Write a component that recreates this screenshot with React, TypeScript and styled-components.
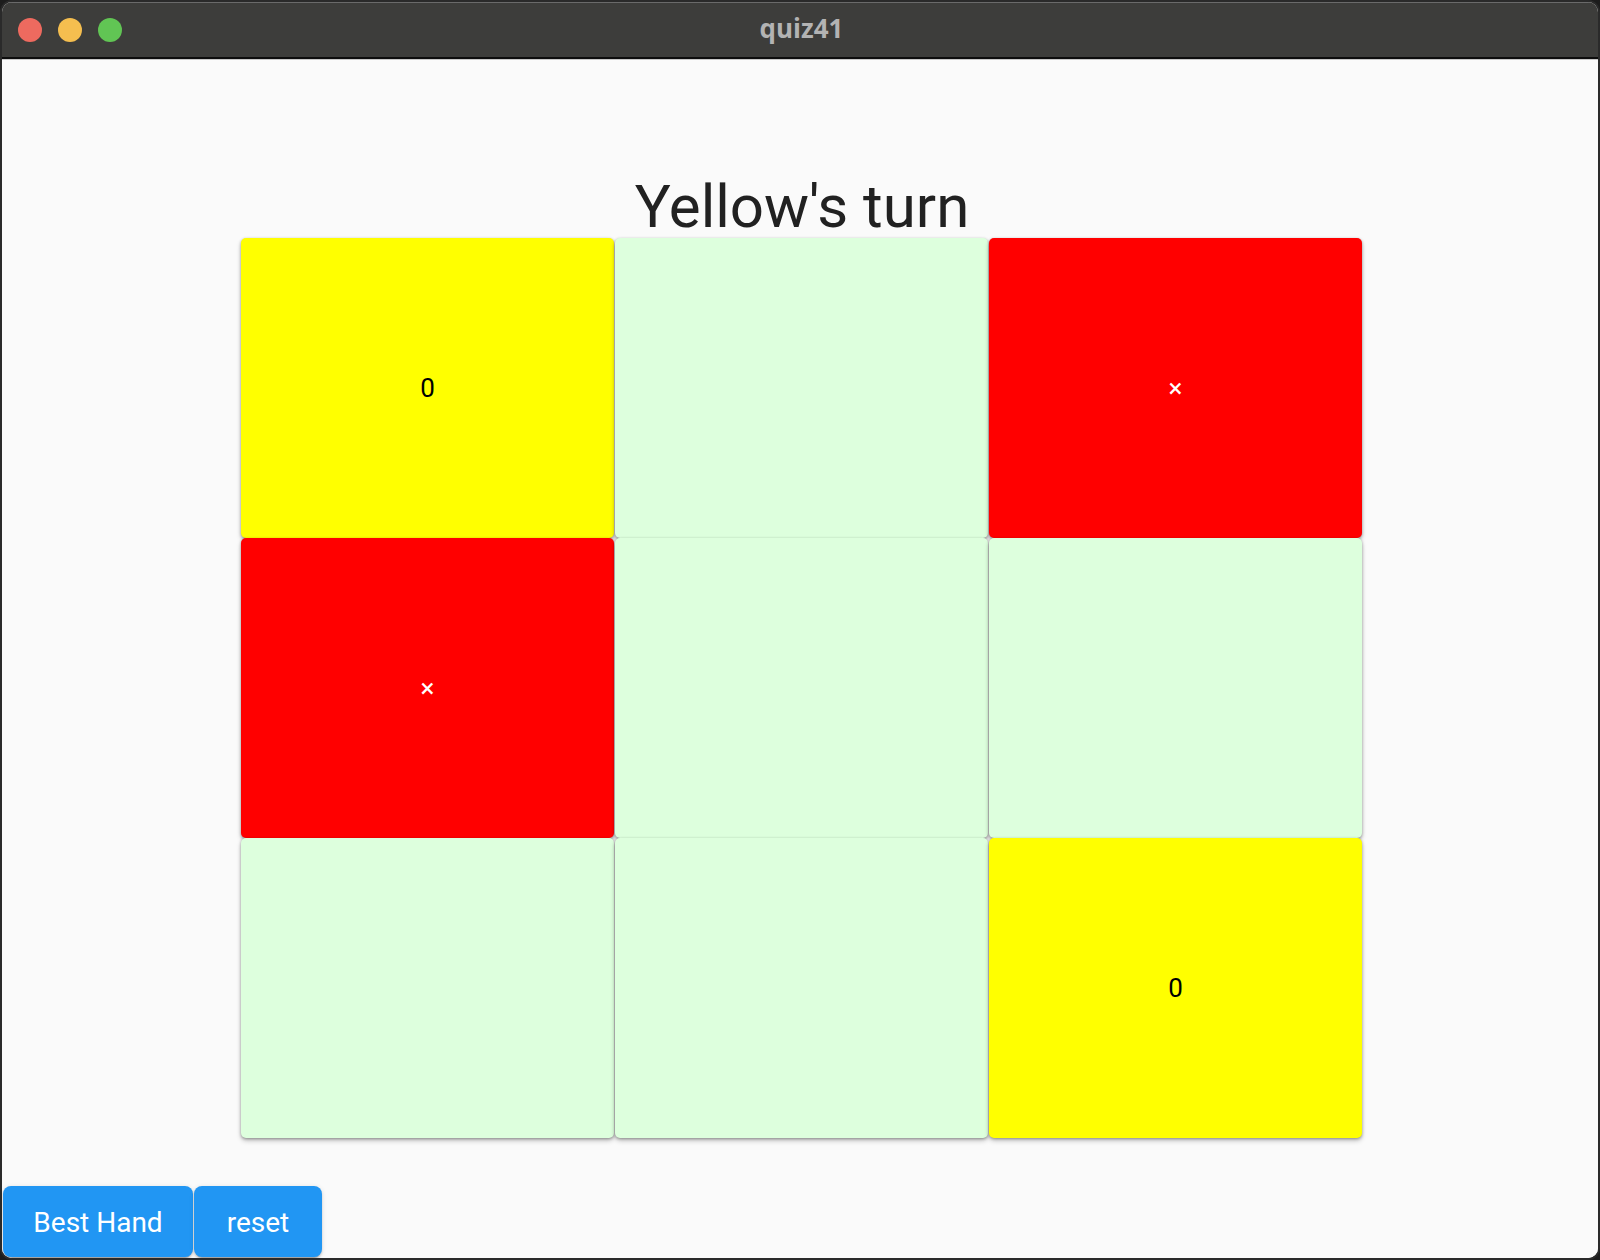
import React from "react";
import styled, { createGlobalStyle } from "styled-components";

const GlobalStyle = createGlobalStyle`
  html, body {
    margin: 0;
    padding: 0;
    background: #1c1c1c;
  }
  #root {
    width: 1600px;
    height: 1260px;
  }
`;

const Window = styled.div`
  box-sizing: border-box;
  width: 1600px;
  height: 1260px;
  display: flex;
  flex-direction: column;
  border: 2px solid #2a2a2a;
  border-radius: 12px;
  overflow: hidden;
  background: #fafafa;
  font-family: Roboto, "Noto Sans", sans-serif;
`;

const TitleBar = styled.div`
  position: relative;
  height: 55px;
  flex: none;
  background: #3d3d3b;
  border-bottom: 2px solid #0d0d0d;
  box-shadow: inset 0 1px 0 #6a6a6a;
  display: flex;
  align-items: center;
  justify-content: center;
`;

const Lights = styled.div`
  position: absolute;
  left: 16px;
  top: 16px;
  display: flex;
  gap: 16px;
`;

const Light = styled.span<{ $c: string }>`
  width: 24px;
  height: 24px;
  border-radius: 50%;
  background: ${(p) => p.$c};
`;

const WindowTitle = styled.div`
  font-family: "Open Sans", "DejaVu Sans", sans-serif;
  font-weight: 700;
  font-size: 26px;
  color: #b3b3b3;
  margin-top: -4px;
  margin-left: 3px;
`;

const Content = styled.div`
  flex: 1;
  display: flex;
  flex-direction: column;
  align-items: center;
  background: #fafafa;
  border-top: 1px solid #c8c8c8;
`;

const Heading = styled.div`
  margin-top: 112px;
  margin-left: 4px;
  font-size: 60px;
  line-height: 70px;
  height: 66px;
  color: #212121;
  position: relative;
  z-index: 2;
`;

const Board = styled.div`
  display: grid;
  grid-template-columns: 373px 373px 373px;
  grid-template-rows: repeat(3, 300px);
  column-gap: 1px;
  margin-left: 3px;
`;

const Cell = styled.div<{ $bg: string }>`
  background: ${(p) => p.$bg};
  border-radius: 5px;
  box-shadow: 0 1px 3px 0 rgba(0, 0, 0, 0.32), 0 3px 5px 0 rgba(0, 0, 0, 0.2);
  display: flex;
  align-items: center;
  justify-content: center;
`;

const Mark = styled.span<{ $light?: boolean }>`
  font-size: 26px;
  color: ${(p) => (p.$light ? "#ffffff" : "#000000")};
`;

const Spacer = styled.div`
  flex: 1;
`;

const ButtonRow = styled.div`
  align-self: flex-start;
  display: flex;
  gap: 1px;
  margin-left: 1px;
  margin-bottom: 1px;
`;

const ActionButton = styled.button<{ $w: number }>`
  width: ${(p) => p.$w}px;
  height: 71px;
  border: none;
  border-radius: 8px;
  background: #2196f3;
  color: #ffffff;
  font-family: Roboto, "Noto Sans", sans-serif;
  font-size: 28px;
  padding: 0;
  padding-top: 2px;
  box-shadow: 0 3px 1px -2px rgba(0, 0, 0, 0.2), 0 2px 2px 0 rgba(0, 0, 0, 0.14),
    0 1px 5px 0 rgba(0, 0, 0, 0.12);
  cursor: pointer;
`;

type CellData = { bg: string; mark?: string; light?: boolean };

const YELLOW = "#ffff00";
const RED = "#ff0000";
const GREEN = "#ddffdd";

const cells: CellData[] = [
  { bg: YELLOW, mark: "0" },
  { bg: GREEN },
  { bg: RED, mark: "×", light: true },
  { bg: RED, mark: "×", light: true },
  { bg: GREEN },
  { bg: GREEN },
  { bg: GREEN },
  { bg: GREEN },
  { bg: YELLOW, mark: "0" },
];

export default function App() {
  return (
    <>
      <GlobalStyle />
      <Window>
        <TitleBar>
          <Lights>
            <Light $c="#ee6a5f" />
            <Light $c="#f5be4f" />
            <Light $c="#61c554" />
          </Lights>
          <WindowTitle>quiz41</WindowTitle>
        </TitleBar>
        <Content>
          <Heading>Yellow's turn</Heading>
          <Board>
            {cells.map((c, i) => (
              <Cell key={i} $bg={c.bg}>
                {c.mark && <Mark $light={c.light}>{c.mark}</Mark>}
              </Cell>
            ))}
          </Board>
          <Spacer />
          <ButtonRow>
            <ActionButton $w={190}>Best Hand</ActionButton>
            <ActionButton $w={128}>reset</ActionButton>
          </ButtonRow>
        </Content>
      </Window>
    </>
  );
}
